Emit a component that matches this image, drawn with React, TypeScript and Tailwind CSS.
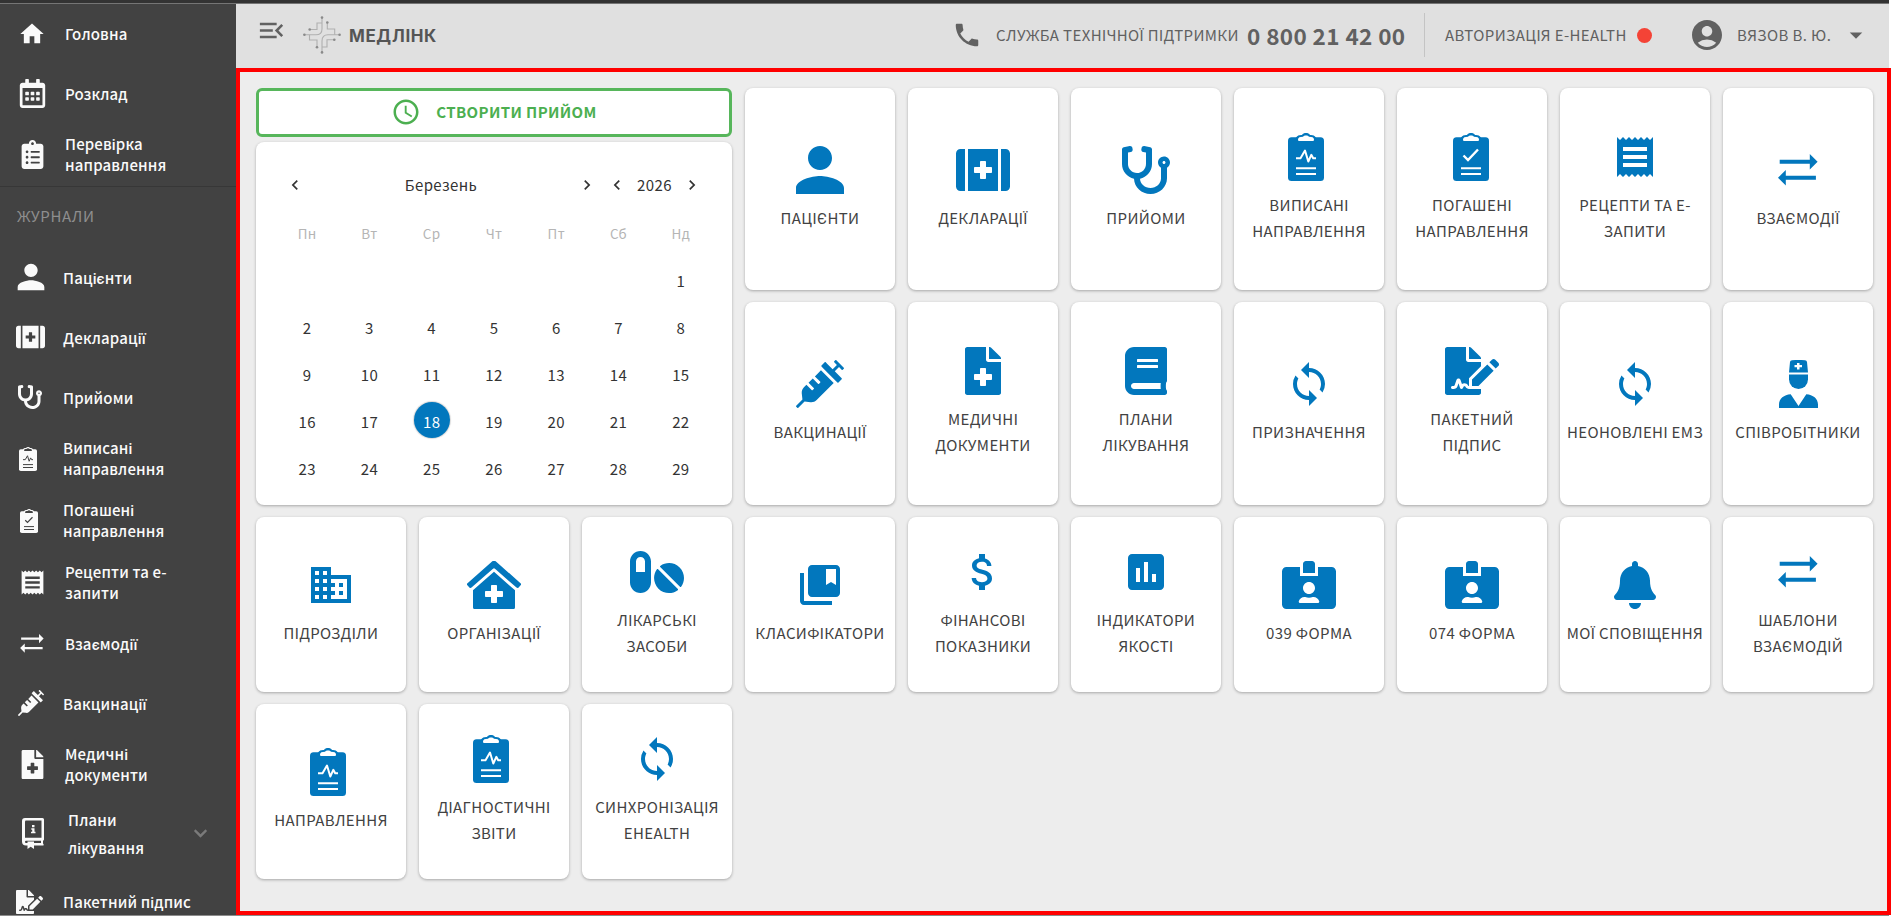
import type { ReactNode } from "react";
import {
  FaBell,
  FaBook,
  FaChevronDown,
  FaClinicMedical,
  FaClipboardList,
  FaFileMedical,
  FaFileSignature,
  FaFirstAid,
  FaIdCardAlt,
  FaPills,
  FaRegCalendarAlt,
  FaStethoscope,
  FaSyringe,
} from "react-icons/fa";
import {
  MdAccessTime,
  MdAccountCircle,
  MdArrowDropDown,
  MdAssessment,
  MdAttachMoney,
  MdBusiness,
  MdChevronLeft,
  MdChevronRight,
  MdCollectionsBookmark,
  MdHome,
  MdMenuOpen,
  MdPerson,
  MdPhone,
  MdReceipt,
  MdSync,
} from "react-icons/md";

type IconProps = { className?: string; cut?: string };

/* Планшет із затискачем; cut — колір "прорізів" */
function Clipboard({ className, cut = "#fff", children }: IconProps & { children: ReactNode }) {
  return (
    <svg viewBox="0 0 36 48" className={className} fill="none">
      <rect y="4.3" width="36" height="43.7" rx="3.5" fill="currentColor" />
      <path d="M7.5 6C8.500 2.500 11 2 14 2C15.500-.6 20.500-.6 22 2C25 2 27.500 2.500 28.500 6Z" fill="currentColor" />
      <path d="M10 6.500C10 4.500 12 3.800 15 3.800C16 2.200 20 2.200 21 3.800C24 3.800 26 4.500 26 6.500C26 7.600 25.500 8 24.500 8H11.500C10.500 8 10 7.600 10 6.500Z" fill={cut} />
      <g stroke={cut} strokeWidth="2">
        {children}
        <path d="M8 35.200H28M8 41H28" />
      </g>
    </svg>
  );
}

function ClipboardPulse(props: IconProps) {
  return (
    <Clipboard {...props}>
      <path d="M8 25.300H12.500L17 17.500L20.300 28.500L23.300 21.800L25.200 25.300H28" strokeLinejoin="round" />
    </Clipboard>
  );
}

function ClipboardCheck(props: IconProps) {
  return (
    <Clipboard {...props}>
      <path d="M10.500 22.500L15 27L25 16.500" strokeWidth="2.400" />
    </Clipboard>
  );
}

function Swap({ className }: IconProps) {
  return (
    <svg viewBox="0 0 40 32" className={className} fill="currentColor">
      <path d="M1.700 5.700H31.800V0L39.600 7.700L31.800 15.400V9.700H1.700Z" />
      <path d="M37.900 21.700H7.800V16L0 23.700L7.800 31.400V25.700H37.900Z" />
    </svg>
  );
}

function Nurse({ className }: IconProps) {
  return (
    <svg viewBox="0 0 39 48" className={className} fill="currentColor">
      <path d="M10 12.500L11 2Q11.200 .3 13 .2Q19.500-.3 26 .2Q27.800 .3 28 2L29 12.500Z" />
      <path d="M10 14.500H29V19.500A9.500 9.500 0 0 1 10 19.500Z" />
      <path d="M0 48V44.500C0 38.500 5 34.800 11.700 34.200L19.500 46L27.300 34.200C34 34.800 39 38.500 39 44.500V48Z" />
      <path d="M18 3H20.500V5H23V7.300H20.500V9.500H18V7.300H15.500V5H18Z" fill="#fff" />
    </svg>
  );
}

function InfoBook({ className, cut = "#424242" }: IconProps) {
  return (
    <svg viewBox="0 0 22 31" className={className} fill="currentColor">
      <path d="M3 0H20.500Q22 0 22 1.500V21.500Q22 22.500 21 22.800V25.500Q22 26 21.500 27.500H12V31L8.700 28.800L5.500 31V27.500H4Q0 27.500 0 23.500V3Q0 0 3 0Z" />
      <path d="M4 2.500H19.500V19.800H3V3.500Q3 2.500 4 2.500Z" fill={cut} />
      <path d="M4 22.700H19V25H12V23.600H5.500V25H4Q3 25 3 23.900Q3 22.700 4 22.700Z" fill={cut} />
      <path d="M10 7H12.500V9.200H10ZM9.300 10.300H12.500V13.800H13.500V15.300H9V13.800H10.200V11.700H9.300Z" />
    </svg>
  );
}

function Logo() {
  return (
    <svg viewBox="0 0 38 38" className="h-[38px] w-[38px]" fill="none">
      <g stroke="#b0b0b0" strokeWidth="1.100">
        <path d="M6.700 13.500H14V7H19M24.300 6.500V13H31.700V18.800M31.300 23.800H24V31H19M14 31.200V24H6.500V18.800" />
        <path d="M1 18.800H13Q19 18.800 19 13V1.500M37 18.800H25Q19 18.800 19 25V36.500" />
      </g>
      <g fill="#8a8a8a">
        <circle cx="19" cy="1.600" r="1.300" />
        <circle cx="24.300" cy="6.500" r="1.300" />
        <circle cx="1.400" cy="18.800" r="1.300" />
        <circle cx="6.700" cy="13.500" r="1.300" />
        <circle cx="36.600" cy="18.800" r="1.300" />
        <circle cx="31.300" cy="23.800" r="1.300" />
        <circle cx="19" cy="36.400" r="1.300" />
        <circle cx="14" cy="31.200" r="1.300" />
      </g>
    </svg>
  );
}

const CUT = "#424242";

// box — ширина колонки з іконкою, разом із відступом до тексту
const mainMenu = [
  { label: "Головна", icon: <MdHome className="size-7" />, box: "w-16 mr-px", row: "h-[59px]" },
  { label: "Розклад", icon: <FaRegCalendarAlt className="size-[29px]" />, box: "w-16 mr-px", row: "h-[60px]" },
  { label: "Перевірка направлення", icon: <FaClipboardList className="size-[29px]" />, box: "w-16 mr-px", row: "h-[62px]" },
];

const journals = [
  { label: "Пацієнти", icon: <MdPerson className="size-10" />, box: "w-[61px] mr-0.5", row: "h-[60px]" },
  { label: "Декларації", icon: <FaFirstAid className="h-[26px] w-[29px]" />, box: "w-[61px] mr-0.5", row: "h-[60px]" },
  { label: "Прийоми", icon: <FaStethoscope className="size-6" />, box: "w-[59px] mr-1", row: "h-[60px]" },
  { label: "Виписані направлення", icon: <ClipboardPulse cut={CUT} className="mt-0.5 h-6 w-[18px]" />, box: "w-14 mr-[7px]", row: "h-[62px]" },
  { label: "Погашені направлення", icon: <ClipboardCheck cut={CUT} className="mt-0.5 h-6 w-[18px]" />, box: "w-[57px] mr-1.5", row: "h-[62px]" },
  { label: "Рецепти та е-запити", icon: <MdReceipt className="size-[29px]" />, box: "w-16 mr-px", row: "h-[62px]" },
  { label: "Взаємодії", icon: <Swap className="h-[19px] w-6" />, box: "w-16 mr-px", row: "h-[60px]" },
  { label: "Вакцинації", icon: <FaSyringe className="size-[26px]" />, box: "w-[61px] mr-0.5", row: "h-[60px]" },
  { label: "Медичні документи", icon: <FaFileMedical className="size-[29px]" />, box: "w-16 mr-px", row: "h-[62px]" },
];

const tiles = [
  { label: "ПАЦІЄНТИ", icon: <MdPerson className="size-[72px]" /> },
  { label: "ДЕКЛАРАЦІЇ", icon: <FaFirstAid className="h-12 w-[54px]" /> },
  { label: "ПРИЙОМИ", icon: <FaStethoscope className="size-12" /> },
  { label: "ВИПИСАНІ НАПРАВЛЕННЯ", icon: <ClipboardPulse className="mr-1.5 h-12 w-9" /> },
  { label: "ПОГАШЕНІ НАПРАВЛЕННЯ", icon: <ClipboardCheck className="mr-[3px] h-12 w-9" /> },
  { label: "РЕЦЕПТИ ТА Е-ЗАПИТИ", icon: <MdReceipt className="size-12" /> },
  { label: "ВЗАЄМОДІЇ", icon: <Swap className="h-8 w-10" /> },
  { label: "ВАКЦИНАЦІЇ", icon: <FaSyringe className="size-12" /> },
  { label: "МЕДИЧНІ ДОКУМЕНТИ", icon: <FaFileMedical className="size-12" /> },
  { label: "ПЛАНИ ЛІКУВАННЯ", icon: <FaBook className="size-12" /> },
  { label: "ПРИЗНАЧЕННЯ", icon: <MdSync className="size-12" /> },
  { label: "ПАКЕТНИЙ ПІДПИС", icon: <FaFileSignature className="h-12 w-[54px]" /> },
  { label: "НЕОНОВЛЕНІ ЕМЗ", icon: <MdSync className="size-12" /> },
  { label: "СПІВРОБІТНИКИ", icon: <Nurse className="h-12 w-[39px]" /> },
  { label: "ПІДРОЗДІЛИ", icon: <MdBusiness className="size-12" /> },
  { label: "ОРГАНІЗАЦІЇ", icon: <FaClinicMedical className="h-12 w-[54px]" /> },
  { label: "ЛІКАРСЬКІ ЗАСОБИ", icon: <FaPills className="h-12 w-[54px]" /> },
  { label: "КЛАСИФІКАТОРИ", icon: <MdCollectionsBookmark className="size-12" /> },
  { label: "ФІНАНСОВІ ПОКАЗНИКИ", icon: <MdAttachMoney className="size-12" /> },
  { label: "ІНДИКАТОРИ ЯКОСТІ", icon: <MdAssessment className="size-12" /> },
  { label: "039 ФОРМА", icon: <FaIdCardAlt className="h-12 w-[54px]" /> },
  { label: "074 ФОРМА", icon: <FaIdCardAlt className="h-12 w-[54px]" /> },
  { label: "МОЇ СПОВІЩЕННЯ", icon: <FaBell className="size-12" /> },
  { label: "ШАБЛОНИ ВЗАЄМОДІЙ", icon: <Swap className="h-8 w-10" /> },
  { label: "НАПРАВЛЕННЯ", icon: <ClipboardPulse className="mr-1.5 h-12 w-9" /> },
  { label: "ДІАГНОСТИЧНІ ЗВІТИ", icon: <ClipboardPulse className="mr-1.5 h-12 w-9" /> },
  { label: "СИНХРОНІЗАЦІЯ EHEALTH", icon: <MdSync className="size-12" /> },
];

const weekdays = ["Пн", "Вт", "Ср", "Чт", "Пт", "Сб", "Нд"];
const days = Array.from({ length: 29 }, (_, i) => i + 1);
const today = 18;

type MenuItem = (typeof mainMenu)[number];

function SidebarItem({ label, icon, box, row }: MenuItem) {
  return (
    <li className={`flex shrink-0 items-center ${row}`}>
      <span className={`flex shrink-0 justify-center ${box}`}>{icon}</span>
      <span className="w-[115px] leading-[21px]">{label}</span>
    </li>
  );
}

function Sidebar() {
  return (
    <aside className="flex h-[911px] w-[236px] shrink-0 flex-col overflow-hidden bg-[#424242] font-medium tracking-[0.15px] text-[#fafafa]">
      <ul className="flex shrink-0 flex-col border-b border-[#373737] pb-px">
        {mainMenu.map((m) => (
          <SidebarItem key={m.label} {...m} />
        ))}
      </ul>
      <div className="flex h-[60px] shrink-0 items-center pb-0.5 pl-[17px] font-normal tracking-[0.6px] text-[#8e8e8e]">ЖУРНАЛИ</div>
      <ul className="flex shrink-0 flex-col">
        {journals.map((m) => (
          <SidebarItem key={m.label} {...m} />
        ))}
        <li className="flex h-[77px] items-center">
          <span className="mr-0.5 flex w-[66px] shrink-0 justify-center">
            <InfoBook className="h-[31px] w-[22px]" />
          </span>
          <span className="w-[125px] leading-7">Плани лікування</span>
          <FaChevronDown className="size-[15px] text-[#7a7a7a]" />
        </li>
        <li className="flex h-[60px] items-center">
          <span className="mr-1 flex w-[59px] shrink-0 justify-center">
            <FaFileSignature className="h-6 w-[27px]" />
          </span>
          <span className="whitespace-nowrap">Пакетний підпис</span>
        </li>
      </ul>
    </aside>
  );
}

function Header() {
  return (
    <header className="flex h-16 w-[1653px] items-center bg-[#e0e0e0] pb-0.5 pl-5 text-[#616161]">
      <MdMenuOpen className="mb-2.5 size-[31px]" />
      <div className="ml-4 flex items-center gap-2">
        <Logo />
        <span className="pt-px font-[Inter] text-[17px] font-bold tracking-[0.6px] text-[#555]">МЕДЛІНК</span>
      </div>
      <div className="ml-auto flex h-full items-center">
        <MdPhone className="size-[30px]" />
        <span className="ml-3.5 w-[251px] whitespace-nowrap">СЛУЖБА ТЕХНІЧНОЇ ПІДТРИМКИ</span>
        <span className="w-[177px] text-[22.5px] font-bold whitespace-nowrap">0 800 21 42 00</span>
        <div className="flex h-11 w-[213px] items-center border-l border-[#c4c4c4] pl-5">
          <span className="whitespace-nowrap">АВТОРИЗАЦІЯ E-HEALTH</span>
        </div>
        <span className="size-[15px] rounded-full bg-[#f44336]" />
        <MdAccountCircle className="ml-[37px] size-9" />
        <span className="ml-3 w-[104px] whitespace-nowrap">ВЯЗОВ В. Ю.</span>
        <MdArrowDropDown className="mr-[18px] size-[30px]" />
      </div>
    </header>
  );
}

function Calendar() {
  return (
    <div className="col-span-3 row-span-2 flex flex-col">
      <button className="mb-[5px] flex h-[49px] items-center justify-center gap-[15px] rounded-md border-[3px] border-[#57b65b] bg-white pb-0.5 font-bold text-[#4caf50]">
        <MdAccessTime className="size-[30px]" />
        СТВОРИТИ ПРИЙОМ
      </button>
      <div className="flex-1 rounded-lg bg-white px-5 pt-[18px] text-[#333] shadow-[0_1px_3px_rgba(0,0,0,0.3)]">
        <div className="flex h-[50px] items-center gap-2.5 pl-[9px]">
          <div className="flex w-[312px] items-center justify-between">
            <MdChevronLeft className="size-5" />
            Березень
            <MdChevronRight className="size-5" />
          </div>
          <div className="flex w-[95px] items-center justify-between">
            <MdChevronLeft className="size-5" />
            2026
            <MdChevronRight className="size-5" />
          </div>
        </div>
        <div className="mb-0.5 grid h-[45px] grid-cols-7 items-center text-center text-[13.5px] text-[#b5b5b5]">
          {weekdays.map((d) => (
            <span key={d}>{d}</span>
          ))}
        </div>
        <div className="grid auto-rows-[47px] grid-cols-7 items-center text-center">
          {days.map((d) =>
            d === today ? (
              <span key={d} className="mb-1 flex size-9 items-center justify-center justify-self-center rounded-full bg-[#0277bd] pt-1 text-white shadow-[0_0_1px_1px_rgba(0,0,0,0.15)]">
                {d}
              </span>
            ) : (
              <span key={d} className={d === 1 ? "col-start-7" : ""}>
                {d}
              </span>
            ),
          )}
        </div>
      </div>
    </div>
  );
}

export default function App() {
  return (
    <div className="h-[919px] w-full overflow-hidden bg-white font-['Noto_Sans_CJK_SC','Roboto',sans-serif] text-[15px] leading-[26px] tracking-[0.38px]">
      <div className="h-1 w-[1889px] border-b border-[#757575] bg-[#333]" />
      <div className="flex">
        <Sidebar />
        <div className="flex flex-col">
          <Header />
          <main className="h-[847px] w-[1655px] border-4 border-[#f00] bg-[#ededed] pt-4 pl-4">
            <div className="grid grid-cols-[repeat(10,150px)] grid-rows-[202px_203px_175px_175px] gap-x-[13px] gap-y-3">
              <Calendar />
              {tiles.map((t) => (
                <div key={t.label} className="flex flex-col items-center justify-center gap-[11px] rounded-lg bg-white px-[5px] pb-0.5 text-center text-[#424242] shadow-[0_1px_3px_rgba(0,0,0,0.3)]">
                  <span className="flex h-12 items-center text-[#0277bd]">{t.icon}</span>
                  <span>{t.label}</span>
                </div>
              ))}
            </div>
          </main>
        </div>
      </div>
      <div className="h-px w-[1889px] bg-[#8c8c8c]" />
    </div>
  );
}
